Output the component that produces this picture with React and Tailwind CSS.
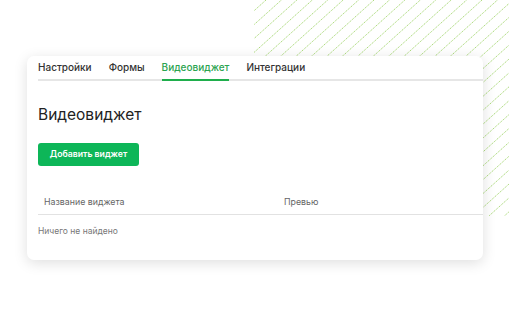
import React from "react";

function Hatch() {
  const lines = [];
  for (let k = -2; k < 34; k++) {
    const x0 = 266 + 15.43 * k - 254;
    lines.push(
      <line
        key={k}
        x1={x0}
        y1={0}
        x2={x0 - 216 / 0.9}
        y2={216}
        stroke="#a9d977"
        strokeWidth="1"
        strokeDasharray="1.3 0.9"
      />
    );
  }
  return (
    <svg
      className="absolute left-[254px] top-0"
      width="255"
      height="216"
      viewBox="0 0 255 216"
    >
      {lines}
    </svg>
  );
}

export default function App() {
  return (
    <div
      className="relative w-[509px] h-[316px] bg-white overflow-hidden"
      style={{ fontFamily: "Inter, 'Noto Sans', sans-serif" }}
    >
      <Hatch />
      <div className="relative pt-[56px] pl-[27px]">
        <div className="w-[456px] h-[204px] bg-white rounded-[7px] shadow-[0_3px_14px_rgba(0,0,0,0.13)] pl-[11px] flex flex-col">
          <div className="flex gap-[17px] border-b-2 border-[#e6e6e6] pt-[4px] text-[10px] leading-[14px] font-medium text-[#333]">
            <div className="pb-[5px]">Настройки</div>
            <div className="pb-[5px]">Формы</div>
            <div className="pb-[3px] -mb-[2px] border-b-2 border-[#1fae4c] text-[#2ba450]">
              <span className="block pb-[2px]">Видеовиджет</span>
            </div>
            <div className="pb-[5px]">Интеграции</div>
          </div>
          <div className="mt-[23px] text-[15.5px] leading-[22px] text-[#222]">Видеовиджет</div>
          <div className="mt-[13px]">
            <button className="w-[101px] h-[23px] rounded-[3px] bg-[#0db658] text-white text-[8.7px] font-semibold">
              Добавить виджет
            </button>
          </div>
          <div className="mt-[24px] flex h-[25px] items-center border-b-[1.5px] border-[#e2e2e2] text-[8.8px] text-[#666]">
            <div className="w-[246px] pl-[6px]">Название виджета</div>
            <div>Превью</div>
          </div>
          <div className="pt-[10px] text-[8.5px] leading-[12px] text-[#777]">Ничего не найдено</div>
        </div>
      </div>
    </div>
  );
}
